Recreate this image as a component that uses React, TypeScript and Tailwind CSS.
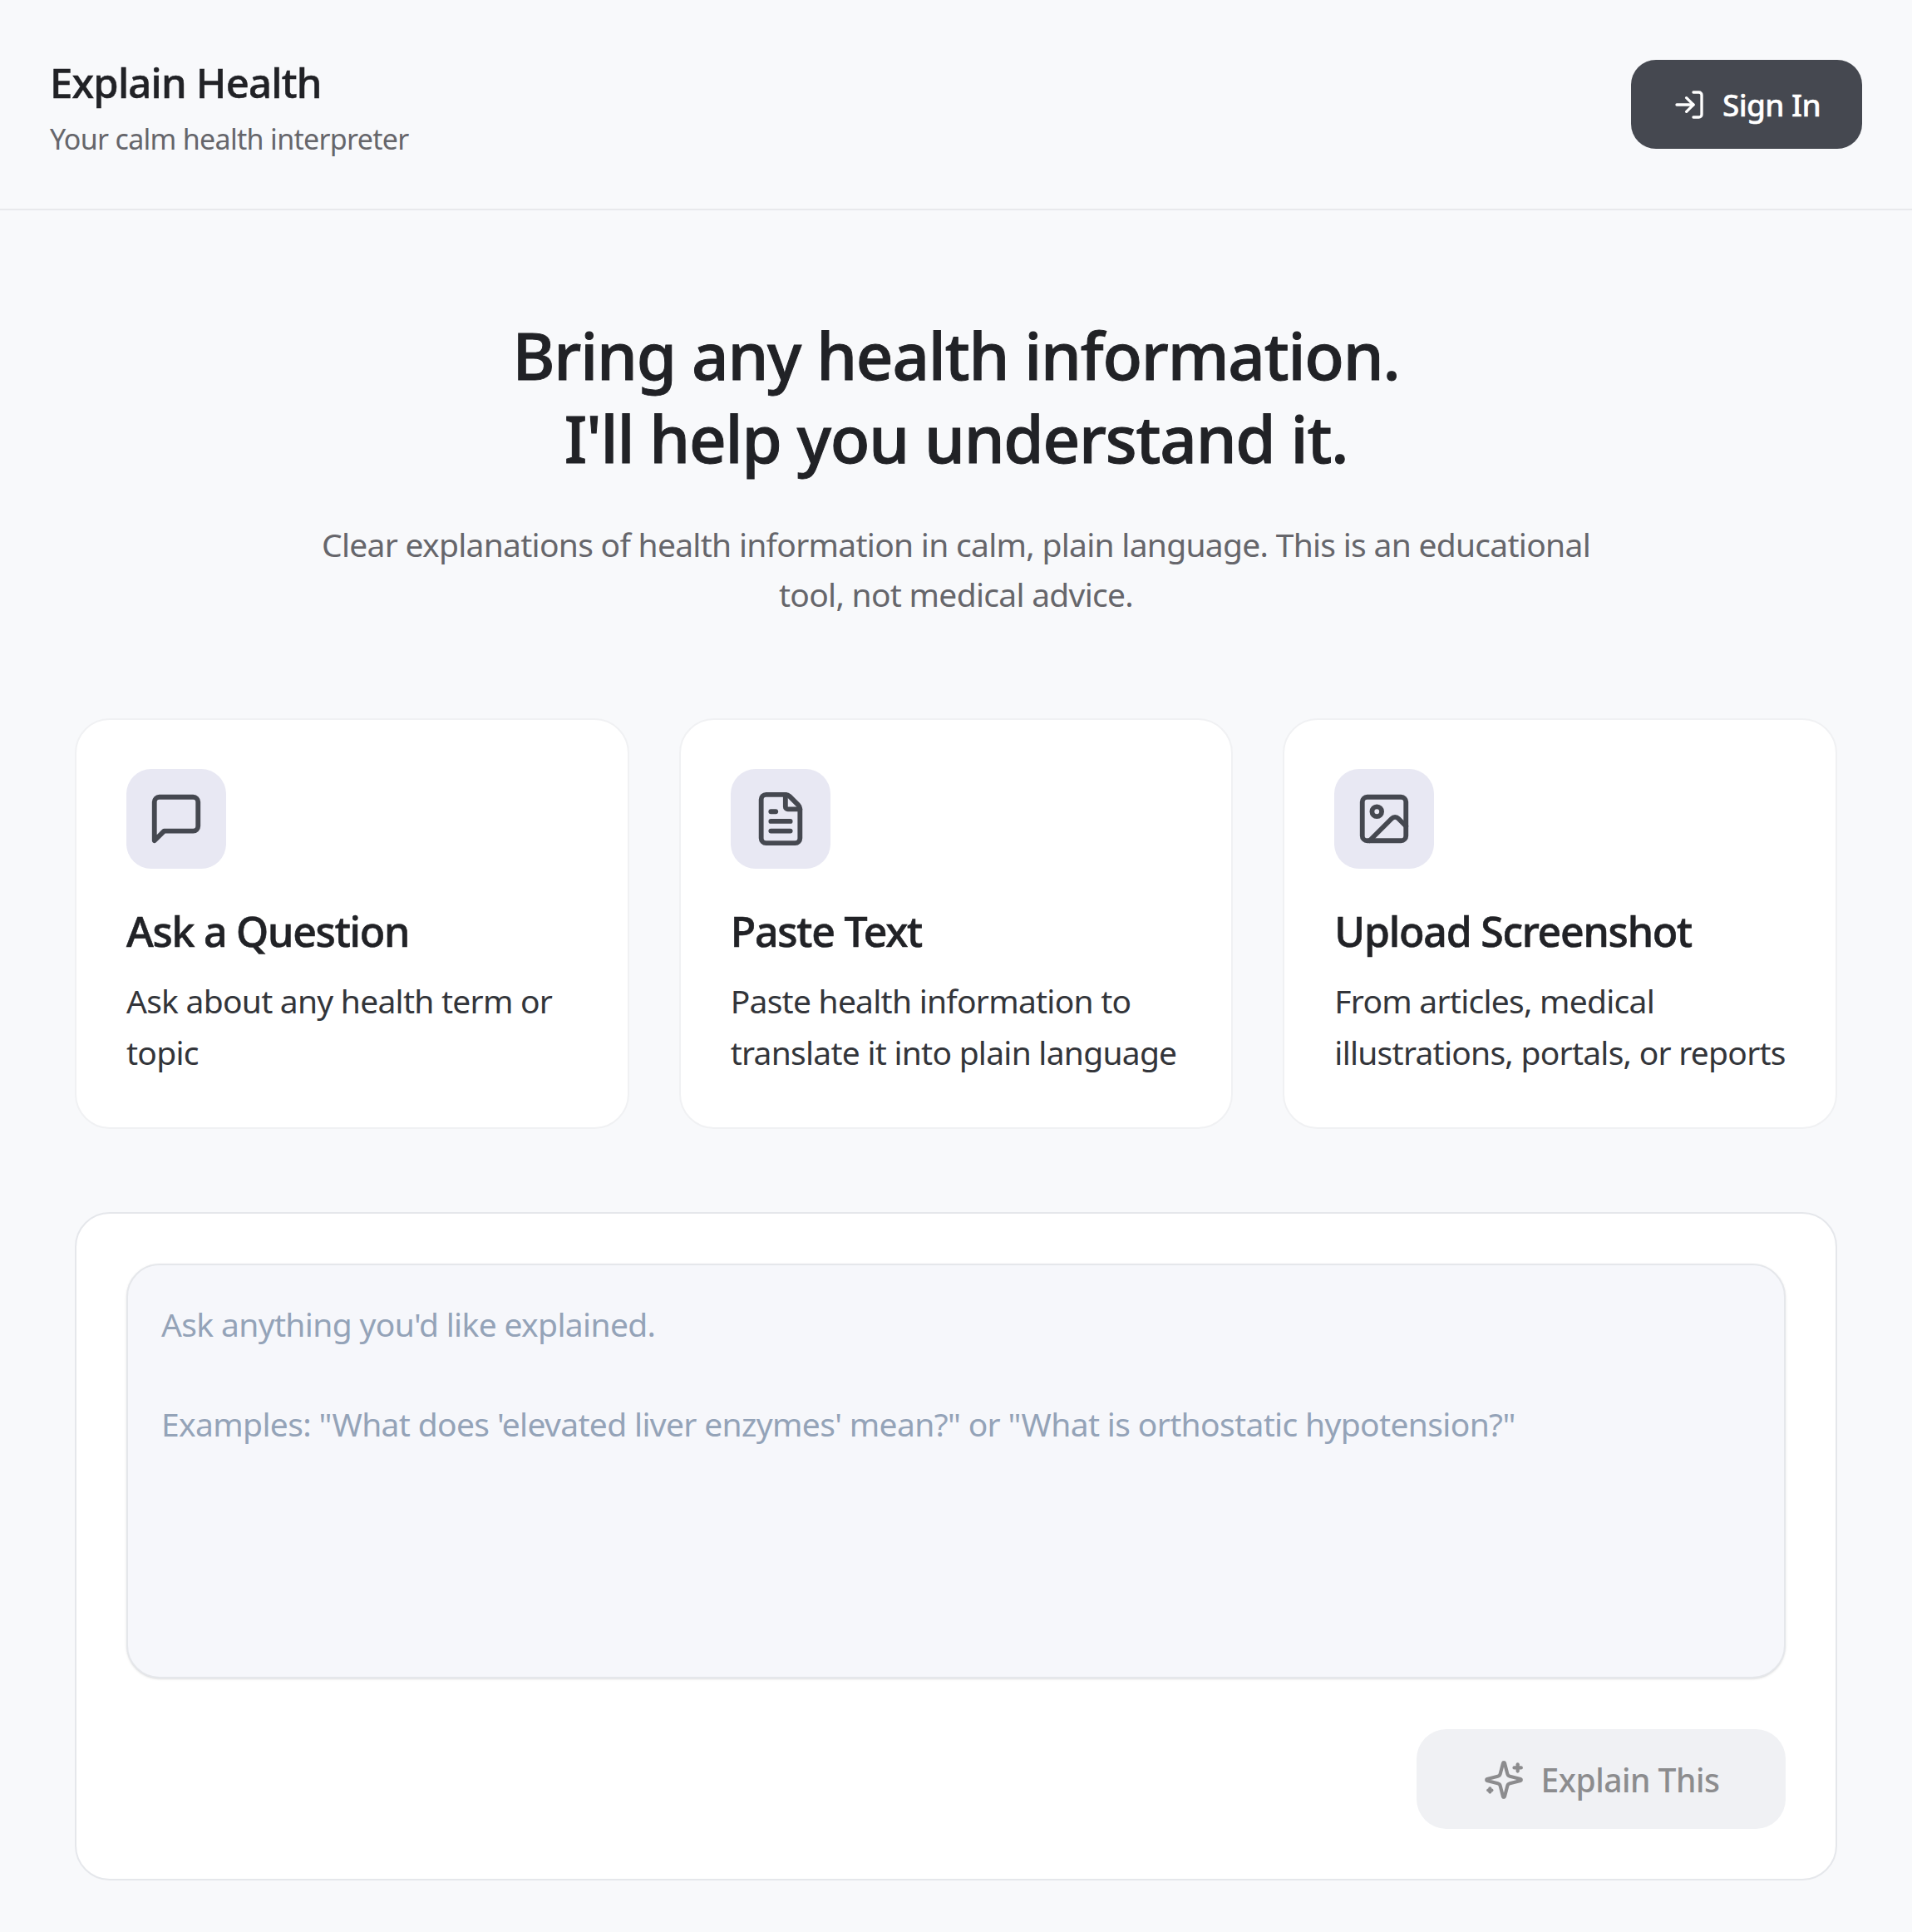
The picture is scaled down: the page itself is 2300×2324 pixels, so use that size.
import React from 'react';
import { LogIn, FileText, Image } from 'lucide-react';

const MessageIcon = () => (
  <svg width="70" height="70" viewBox="0 0 24 24" fill="none" stroke="currentColor" strokeWidth="2" strokeLinecap="round" strokeLinejoin="round">
    <path d="M21 15a2 2 0 0 1-2 2H7l-4 4V5a2 2 0 0 1 2-2h14a2 2 0 0 1 2 2z" />
  </svg>
);

const SparkIcon = () => (
  <svg width="50" height="50" viewBox="0 0 24 24" fill="none" stroke="currentColor" strokeWidth="2" strokeLinecap="round" strokeLinejoin="round">
    <path d="M9.937 15.5A2 2 0 0 0 8.5 14.063l-6.135-1.582a.5.5 0 0 1 0-.962L8.5 9.936A2 2 0 0 0 9.937 8.5l1.582-6.135a.5.5 0 0 1 .963 0L14.063 8.5A2 2 0 0 0 15.5 9.937l6.135 1.581a.5.5 0 0 1 0 .964L15.5 14.063a2 2 0 0 0-1.437 1.437l-1.582 6.135a.5.5 0 0 1-.963 0z" />
    <path d="M20 3v4" />
    <path d="M22 5h-4" />
    <path d="M4 17v2" />
    <path d="M5 18H3" />
  </svg>
);

const cards = [
  { title: 'Ask a Question', desc: 'Ask about any health term or topic', icon: <MessageIcon /> },
  { title: 'Paste Text', desc: 'Paste health information to translate it into plain language', icon: <FileText size={70} strokeWidth={2} /> },
  { title: 'Upload Screenshot', desc: 'From articles, medical illustrations, portals, or reports', icon: <Image size={70} strokeWidth={2} /> },
];

const App: React.FC = () => {
  return (
    <div className="min-h-[2324px] bg-[#f8f9fb] font-['Noto_Sans',sans-serif] text-[#212226]">
      <header className="h-[253px] border-b-2 border-[#e8e9ec] px-[60px] flex items-center justify-between">
        <div className="pt-[3px]">
          <h1 className="text-[49px] leading-[72px] font-medium tracking-[-0.8px] [-webkit-text-stroke:0.5px]">Explain Health</h1>
          <p className="mt-[8px] text-[34px] leading-[48px] tracking-[-0.7px] text-[#66666b]">Your calm health interpreter</p>
        </div>
        <button className="w-[278px] h-[107px] rounded-[30px] bg-[#454850] text-white flex items-center justify-center gap-[20px] text-[37px] font-medium tracking-[-0.6px] [-webkit-text-stroke:0.4px]">
          <LogIn size={40} strokeWidth={2} />
          Sign In
        </button>
      </header>

      <main className="w-[2120px] mx-auto">
        <section className="pt-[124px] flex flex-col items-center text-center">
          <h2 className="text-[78px] leading-[100px] font-medium tracking-[-1.2px] [-webkit-text-stroke:1px]">
            Bring any health information.
            <br />
            I'll help you understand it.
          </h2>
          <p className="mt-[48px] w-[1560px] text-[39px] leading-[60px] tracking-[-0.72px] text-[#66666b]">
            Clear explanations of health information in calm, plain language. This is an educational tool, not medical advice.
          </p>
        </section>

        <section className="mt-[119px] grid grid-cols-3 gap-[60px]">
          {cards.map((card) => (
            <div key={card.title} className="h-[494px] bg-white rounded-[42px] border-2 border-[#f0f1f3] px-[60px] pt-[59px]">
              <div className="w-[120px] h-[120px] rounded-[30px] bg-[#e8e8f3] text-[#454850] flex items-center justify-center">
                {card.icon}
              </div>
              <h3 className="mt-[44px] text-[50px] leading-[62px] font-medium tracking-[-1.25px] [-webkit-text-stroke:0.6px]">{card.title}</h3>
              <p className="mt-[22px] text-[39px] leading-[62px] tracking-[-0.75px] text-[#33353a]">{card.desc}</p>
            </div>
          ))}
        </section>

        <section className="mt-[100px] bg-white rounded-[42px] border-2 border-[#e5e7eb] p-[60px]">
          <textarea
            className="block w-full h-[499px] resize-none rounded-[40px] bg-[#f6f7fb] border-2 border-[#e5e7eb] shadow-sm px-[40px] py-[41px] text-[39px] leading-[60px] tracking-[-0.65px] outline-none placeholder:text-[#94a3b8]"
            placeholder={`Ask anything you'd like explained.\n\nExamples: "What does 'elevated liver enzymes' mean?" or "What is orthostatic hypotension?"`}
          />
          <div className="mt-[61px] flex justify-end">
            <button disabled className="w-[444px] h-[120px] rounded-[36px] bg-[#f0f1f4] text-[#8c8c8e] flex items-center justify-center gap-[20px] text-[39px] font-medium tracking-[-0.5px] pt-[2px]">
              <SparkIcon />
              Explain This
            </button>
          </div>
        </section>
      </main>
    </div>
  );
};

export default App;
